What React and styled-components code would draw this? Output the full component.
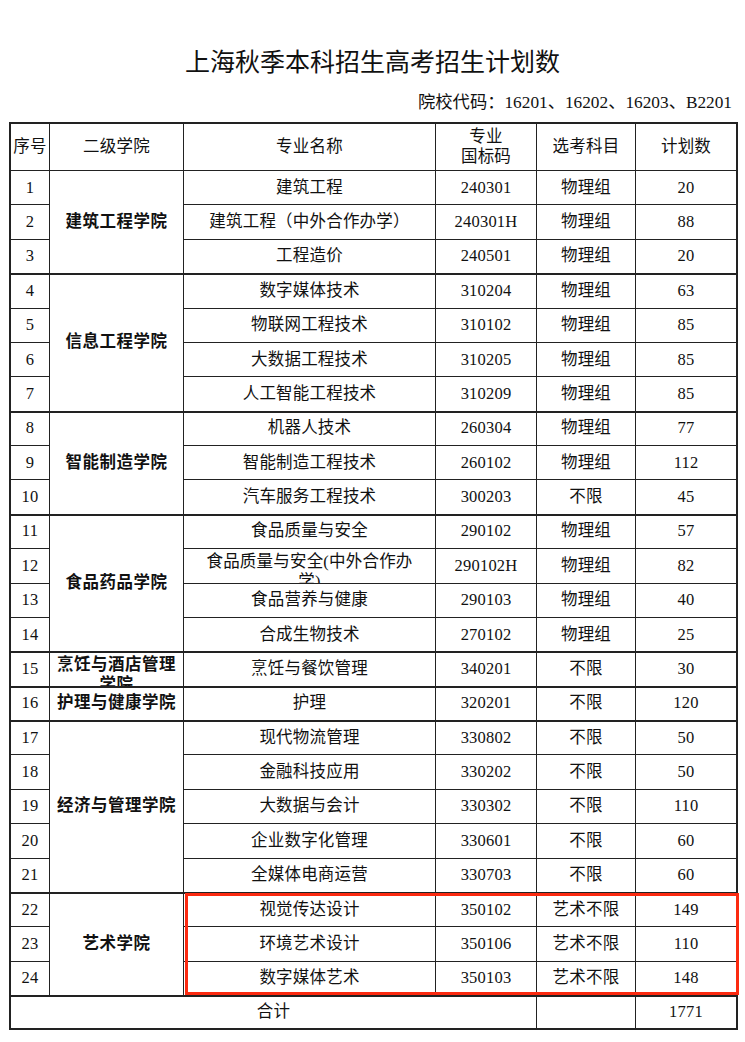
import React from "react";
import styled, { createGlobalStyle } from "styled-components";

const GlobalStyle = createGlobalStyle`
  html, body { margin: 0; padding: 0; background: #fff; }
  body { font-family: "Liberation Serif", "Noto Sans CJK SC", serif; color: #111; }
`;

const Page = styled.div`
  width: 745px;
  height: 1042px;
  box-sizing: border-box;
  padding-top: 43px;
  overflow: hidden;
`;

const Title = styled.h1`
  margin: 0;
  text-align: center;
  font-family: "Noto Sans CJK SC", sans-serif;
  font-weight: 400;
  font-size: 25px;
  line-height: 34px;
`;

const Codes = styled.div`
  margin-top: 15px;
  padding-right: 13px;
  text-align: right;
  font-size: 17.3px;
  line-height: 22px;
`;

const Table = styled.div`
  position: relative;
  margin: 8px 0 0 9px;
  width: 729px;
  box-sizing: border-box;
  display: grid;
  grid-template-columns: 38px 133px 251px 100px 98px 100px;
  grid-template-rows: 46px repeat(24, 33.375px) 32px;
  gap: 1px;
  background: #222;
  border: 2px solid #222;
`;

const Cell = styled.div`
  background: #fff;
  display: flex;
  align-items: ${(p) => (p.$clip ? "flex-start" : "center")};
  justify-content: center;
  text-align: center;
  box-sizing: border-box;
  font-size: 16.5px;
  line-height: 20px;
  letter-spacing: 0.2px;
  white-space: ${(p) => (p.$nowrap ? "nowrap" : "normal")};
  overflow: hidden;
  padding: ${(p) => (p.$clip ? "3px 20px 0" : "0")};
  font-weight: ${(p) => (p.$bold ? 700 : 400)};
  grid-row: span ${(p) => p.$rows || 1};
  grid-column: span ${(p) => p.$cols || 1};
  box-shadow: ${(p) => (p.$top ? "inset 0 1px 0 #222" : "none")};
`;

const College = styled(Cell)`
  padding: ${(p) => (p.$clip ? "3px 4px 0" : "0 4px")};
  letter-spacing: 0.5px;
`;

const Highlight = styled.div`
  position: absolute;
  grid-column: 3 / 7;
  grid-row: 23 / 26;
  top: 0;
  bottom: 0;
  left: 1px;
  right: -3px;
  border: 3px solid #fb2a10;
  pointer-events: none;
`;

const groups = [
  {
    name: "建筑工程学院",
    rows: [
      ["建筑工程", "240301", "物理组", 20],
      ["建筑工程（中外合作办学）", "240301H", "物理组", 88],
      ["工程造价", "240501", "物理组", 20],
    ],
  },
  {
    name: "信息工程学院",
    rows: [
      ["数字媒体技术", "310204", "物理组", 63],
      ["物联网工程技术", "310102", "物理组", 85],
      ["大数据工程技术", "310205", "物理组", 85],
      ["人工智能工程技术", "310209", "物理组", 85],
    ],
  },
  {
    name: "智能制造学院",
    rows: [
      ["机器人技术", "260304", "物理组", 77],
      ["智能制造工程技术", "260102", "物理组", 112],
      ["汽车服务工程技术", "300203", "不限", 45],
    ],
  },
  {
    name: "食品药品学院",
    rows: [
      ["食品质量与安全", "290102", "物理组", 57],
      ["食品质量与安全(中外合作办学)", "290102H", "物理组", 82, true],
      ["食品营养与健康", "290103", "物理组", 40],
      ["合成生物技术", "270102", "物理组", 25],
    ],
  },
  {
    name: "烹饪与酒店管理学院",
    clip: true,
    rows: [["烹饪与餐饮管理", "340201", "不限", 30]],
  },
  {
    name: "护理与健康学院",
    rows: [["护理", "320201", "不限", 120]],
  },
  {
    name: "经济与管理学院",
    rows: [
      ["现代物流管理", "330802", "不限", 50],
      ["金融科技应用", "330202", "不限", 50],
      ["大数据与会计", "330302", "不限", 110],
      ["企业数字化管理", "330601", "不限", 60],
      ["全媒体电商运营", "330703", "不限", 60],
    ],
  },
  {
    name: "艺术学院",
    rows: [
      ["视觉传达设计", "350102", "艺术不限", 149],
      ["环境艺术设计", "350106", "艺术不限", 110],
      ["数字媒体艺术", "350103", "艺术不限", 148],
    ],
  },
];

function Body() {
  let n = 0;
  const cells = [];
  groups.forEach((g, gi) => {
    g.rows.forEach(([name, code, subject, plan, clip], ri) => {
      n += 1;
      const top = gi > 0 && ri === 0;
      cells.push(<Cell key={`s${n}`} $top={top}>{n}</Cell>);
      if (ri === 0) {
        cells.push(
          <College key={`c${n}`} $rows={g.rows.length} $bold $clip={g.clip} $top={top}>
            {g.name}
          </College>
        );
      }
      cells.push(<Cell key={`n${n}`} $clip={clip} $top={top}>{name}</Cell>);
      cells.push(<Cell key={`k${n}`} $top={top}>{code}</Cell>);
      cells.push(<Cell key={`j${n}`} $top={top}>{subject}</Cell>);
      cells.push(<Cell key={`p${n}`} $top={top}>{plan}</Cell>);
    });
  });
  return cells;
}

export default function App() {
  return (
    <>
      <GlobalStyle />
      <Page>
        <Title>上海秋季本科招生高考招生计划数</Title>
        <Codes>院校代码：16201、16202、16203、B2201</Codes>
        <Table>
          <Cell $nowrap>序号</Cell>
          <Cell>二级学院</Cell>
          <Cell>专业名称</Cell>
          <Cell>
            专业
            <br />
            国标码
          </Cell>
          <Cell>选考科目</Cell>
          <Cell>计划数</Cell>
          <Body />
          <Cell $cols={4} $top>合计</Cell>
          <Cell $top />
          <Cell $top>1771</Cell>
          <Highlight />
        </Table>
      </Page>
    </>
  );
}
